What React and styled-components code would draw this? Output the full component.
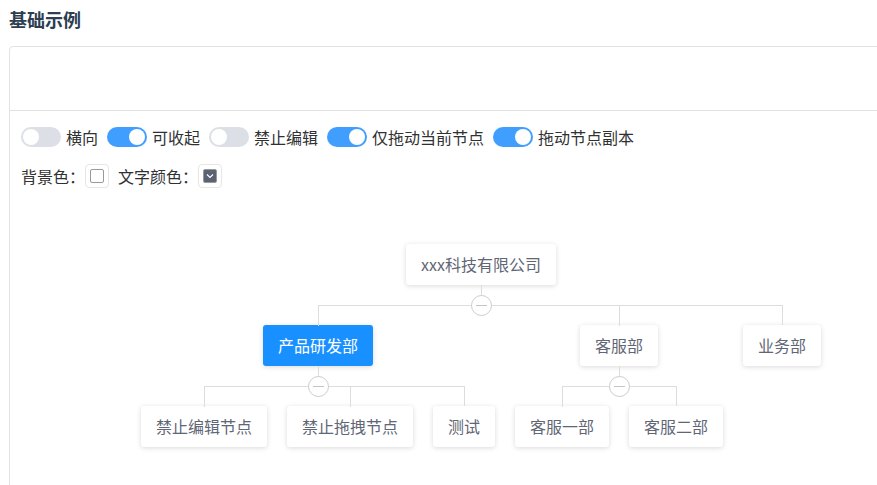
import React from 'react'
import styled, { createGlobalStyle } from 'styled-components'

const GlobalStyle = createGlobalStyle`
  html, body {
    margin: 0;
    padding: 0;
    overflow: hidden;
    background: #fff;
  }
  body {
    font-family: "Noto Sans CJK SC", "Noto Sans", sans-serif;
    color: #303133;
  }
`

const Page = styled.div`
  padding: 7px 0 0 9px;
`

const Title = styled.h3`
  margin: 0 0 15px 0;
  font-size: 18px;
  line-height: 24px;
  font-weight: 700;
  color: #2c3e50;
`

const Demo = styled.div`
  width: 944px;
  box-sizing: border-box;
  border: 1px solid #e2e2e2;
  border-radius: 4px 0 0 0;
`

const Preview = styled.div`
  height: 63px;
  border-bottom: 1px solid #e2e2e2;
`

const Controls = styled.div`
  padding: 16px 11px 0;
  display: flex;
  flex-direction: column;
  gap: 17px;
`

const Row = styled.div`
  display: flex;
  align-items: center;
  height: ${p => p.h || 20}px;
`

const SwitchItem = styled.label`
  display: inline-flex;
  align-items: center;
  margin-right: 9px;
  cursor: pointer;
`

const Core = styled.span`
  position: relative;
  width: 40px;
  height: 20px;
  border-radius: 10px;
  box-sizing: border-box;
  background: ${p => (p.on ? '#409eff' : '#dcdfe6')};
  &::after {
    content: '';
    position: absolute;
    top: 2px;
    left: ${p => (p.on ? '22px' : '2px')};
    width: 16px;
    height: 16px;
    border-radius: 50%;
    background: #fff;
  }
`

const SwitchLabel = styled.span`
  margin-left: 5px;
  font-size: 16px;
  line-height: 20px;
  color: #303133;
`

const FieldLabel = styled.span`
  font-size: 16px;
  line-height: 24px;
  color: #303133;
`

const Picker = styled.span`
  width: 24px;
  height: 24px;
  box-sizing: border-box;
  padding: 4px;
  border: 1px solid #e6e6e6;
  border-radius: 4px;
  margin-right: 9px;
  display: inline-flex;
`

const Swatch = styled.span`
  width: 14px;
  height: 14px;
  box-sizing: border-box;
  border: 1px solid #999;
  border-radius: 2px;
  background: ${p => p.color || '#fff'};
  display: flex;
  align-items: center;
  justify-content: center;
`

const TreeArea = styled.div`
  display: flex;
  justify-content: center;
  padding: 56px 0 40px;
`

const NodeWrap = styled.div`
  display: flex;
  flex-direction: column;
  align-items: center;
`

const Label = styled.div`
  margin: 0 10px;
  padding: 10px 15px;
  font-size: 16px;
  line-height: 21px;
  white-space: nowrap;
  border-radius: 3px;
  color: ${p => (p.active ? '#fff' : '#5f6675')};
  background: ${p => (p.active ? '#1890ff' : '#fff')};
  box-shadow: 0 1px 5px rgba(0, 0, 0, 0.15);
`

const Children = styled.div`
  position: relative;
  display: flex;
  padding-top: 20px;
  &::before {
    content: '';
    position: absolute;
    top: 0;
    left: 50%;
    height: 20px;
    border-left: 1px solid #ddd;
  }
`

const Collapse = styled.span`
  position: absolute;
  top: 10px;
  left: 50%;
  margin-left: -10px;
  width: 21px;
  height: 21px;
  box-sizing: border-box;
  border: 1px solid #ccc;
  border-radius: 50%;
  background: #fff;
  z-index: 1;
  &::after {
    content: '';
    position: absolute;
    top: 9px;
    left: 4px;
    width: 11px;
    border-top: 1px solid #c4c4c4;
  }
`

const Child = styled.div`
  position: relative;
  padding-top: 20px;
  display: flex;
  justify-content: center;
  &::before,
  &::after {
    content: '';
    position: absolute;
    top: 0;
    width: 50%;
    height: 20px;
    border-top: 1px solid #ddd;
  }
  &::before {
    right: 50%;
  }
  &::after {
    left: 50%;
    border-left: 1px solid #ddd;
  }
  &:first-of-type::before {
    border-top: none;
  }
  &:last-of-type::after {
    border-top: none;
  }
`

const tree = {
  label: 'xxx科技有限公司',
  children: [
    {
      label: '产品研发部',
      active: true,
      children: [{ label: '禁止编辑节点' }, { label: '禁止拖拽节点' }, { label: '测试' }],
    },
    {
      label: '客服部',
      children: [{ label: '客服一部' }, { label: '客服二部' }],
    },
    { label: '业务部' },
  ],
}

const TreeNode = ({ node }) => (
  <NodeWrap>
    <Label active={node.active}>{node.label}</Label>
    {node.children && (
      <Children>
        {node.children.map(c => (
          <Child key={c.label}>
            <TreeNode node={c} />
          </Child>
        ))}
        <Collapse />
      </Children>
    )}
  </NodeWrap>
)

const switches = [
  ['横向', false],
  ['可收起', true],
  ['禁止编辑', false],
  ['仅拖动当前节点', true],
  ['拖动节点副本', true],
]

const Chevron = () => (
  <svg width="8" height="6" viewBox="0 0 8 6">
    <path d="M1 1.5 L4 4.5 L7 1.5" fill="none" stroke="#fff" strokeWidth="1.2" />
  </svg>
)

export default function App() {
  return (
    <Page>
      <GlobalStyle />
      <Title>基础示例</Title>
      <Demo>
        <Preview />
        <Controls>
          <Row>
            {switches.map(([text, on]) => (
              <SwitchItem key={text}>
                <Core on={on ? 1 : 0} />
                <SwitchLabel>{text}</SwitchLabel>
              </SwitchItem>
            ))}
          </Row>
          <Row h={24}>
            <FieldLabel>背景色：</FieldLabel>
            <Picker>
              <Swatch />
            </Picker>
            <FieldLabel>文字颜色：</FieldLabel>
            <Picker>
              <Swatch color="#5a6274">
                <Chevron />
              </Swatch>
            </Picker>
          </Row>
        </Controls>
        <TreeArea>
          <TreeNode node={tree} />
        </TreeArea>
      </Demo>
    </Page>
  )
}
